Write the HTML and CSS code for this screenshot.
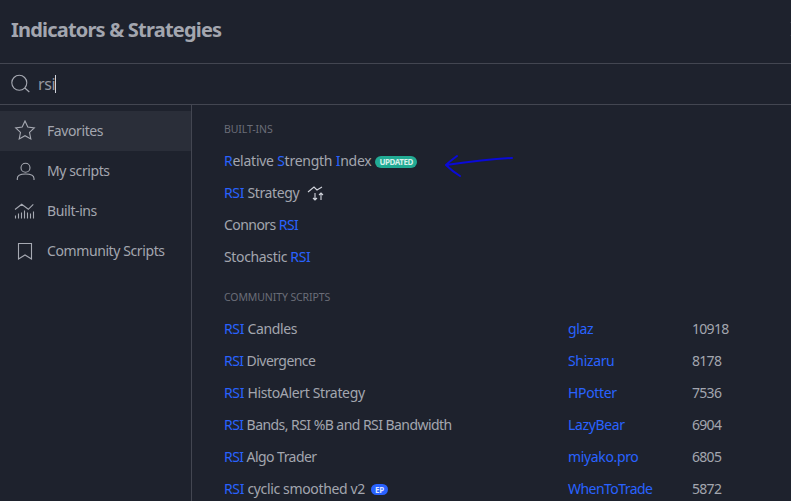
FILE: index.html
```html
<!DOCTYPE html>
<html lang="en">
<head>
<meta charset="utf-8">
<title>Indicators &amp; Strategies</title>
<link rel="stylesheet" href="styles.css">
</head>
<body>
<div class="dialog">
  <header class="head">
    <h1 class="title">Indicators &amp; Strategies</h1>
    <svg class="close" width="16" height="16" viewBox="0 0 16 16"><path d="M1 1l14 14M15 1L1 15" stroke="#b2b5be" stroke-width="1.2" fill="none"/></svg>
  </header>
  <div class="search">
    <svg class="search-icon" width="20" height="20" viewBox="0 0 20 20" fill="none" stroke="#a6a9b2" stroke-width="1.1"><circle cx="8.300" cy="8.800" r="7.500"/><path d="M13.800 14l4.500 4"/></svg>
    <span class="query">rsi</span><span class="caret"></span>
  </div>
  <div class="body">
    <nav class="side">
      <div class="nav active">
        <svg class="nav-icon" width="22" height="22" viewBox="0 0 22 22" fill="none" stroke="#a6a9b2" stroke-width="1.1"><path d="M11 1l2.800 6.100 6.500.8-4.800 4.500 1.300 6.600L11 15.700 5.200 19l1.300-6.600L1.700 7.900l6.500-.8z"/></svg>
        <span class="nav-text">Favorites</span>
      </div>
      <div class="nav">
        <svg class="nav-icon" width="22" height="22" viewBox="0 0 22 22" fill="none" stroke="#a6a9b2" stroke-width="1.1"><circle cx="11.500" cy="7.800" r="4.500"/><path d="M3.300 20v-1.500C3.300 15.500 6.500 14 11.500 14s8.500 1.500 8.500 4.500V20"/></svg>
        <span class="nav-text">My scripts</span>
      </div>
      <div class="nav">
        <svg class="nav-icon" width="22" height="22" viewBox="0 0 22 22" fill="none" stroke="#a6a9b2" stroke-width="1.1"><path d="M1 9.500l6.700-5.200 6.600 5 5-5M1.500 18.500v-3M4.500 18.500v-5M7.500 18.500v-6M10.500 18.500v-8M13.500 18.500v-6M16.500 18.500v-5M19.500 18.500v-7"/></svg>
        <span class="nav-text">Built-ins</span>
      </div>
      <div class="nav">
        <svg class="nav-icon" width="22" height="22" viewBox="0 0 22 22" fill="none" stroke="#a6a9b2" stroke-width="1.1"><path d="M4.500 3.500h13V19L11 15l-6.500 4z"/></svg>
        <span class="nav-text">Community Scripts</span>
      </div>
    </nav>
    <main class="main">
      <div class="section">BUILT-INS</div>
      <div class="row"><div class="name loose"><b>R</b>elative <b>S</b>trength <b>I</b>ndex<span class="badge updated">UPDATED</span></div></div>
      <div class="row"><div class="name"><b>RSI</b> Strategy<svg class="strategy" width="18" height="18" viewBox="0 0 18 18" fill="none" stroke="#d1d4dc" stroke-width="1.100"><path d="M1 7l6-5 3 3 5-3M8 8v7M6 13l2 2 2-2M14 15V8M12 10l2-2 2 2"/></svg></div></div>
      <div class="row"><div class="name tight">Connors <b>RSI</b></div></div>
      <div class="row"><div class="name">Stochastic <b>RSI</b></div></div>
      <div class="section">COMMUNITY SCRIPTS</div>
      <div class="row"><div class="name"><b>RSI</b> Candles</div><a class="author">glaz</a><span class="count">10918</span></div>
      <div class="row"><div class="name tight"><b>RSI</b> Divergence</div><a class="author">Shizaru</a><span class="count">8178</span></div>
      <div class="row"><div class="name"><b>RSI</b> HistoAlert Strategy</div><a class="author">HPotter</a><span class="count">7536</span></div>
      <div class="row"><div class="name tight"><b>RSI</b> Bands, RSI %B and RSI Bandwidth</div><a class="author">LazyBear</a><span class="count">6904</span></div>
      <div class="row"><div class="name tight"><b>RSI</b> Algo Trader</div><a class="author">miyako.pro</a><span class="count">6805</span></div>
      <div class="row"><div class="name"><b>RSI</b> cyclic smoothed v2<span class="badge ep">EP</span></div><a class="author tight">WhenToTrade</a><span class="count">5872</span></div>
    </main>
  </div>
</div>
<svg class="arrow" width="80" height="30" viewBox="0 0 80 30" fill="none" stroke="#0a0ad8" stroke-width="2" stroke-linecap="round" stroke-linejoin="round"><path d="M70 6 C50 7 25 10 4 13 M15 4 C11 7 7 10 4 13 C8 17 13 21 18 24"/></svg>
</body>
</html>
```
FILE: styles.css
```css
html, body { margin: 0; padding: 0; background: #1e222d; overflow: hidden; }
body { width: 791px; height: 501px; position: relative; font-family: "Noto Sans", sans-serif; color: #b2b5be; letter-spacing: -0.35px; }
.dialog { width: 791px; height: 501px; display: flex; flex-direction: column; overflow: hidden; }
.head { height: 58px; padding-bottom: 5px; flex: none; display: flex; align-items: center; justify-content: space-between; padding-left: 11px; border-bottom: 1px solid #434651; }
.title { margin: 0; font-size: 20px; font-weight: 700; color: #a3a6af; letter-spacing: -0.8px; }
.close { margin-right: -15px; }
.search { height: 40px; flex: none; display: flex; align-items: center; padding-left: 11px; border-bottom: 1px solid #434651; font-size: 16px; color: #9598a1; }
.search-icon { margin-right: 7px; }
.caret { width: 1px; height: 18px; background: #d1d4dc; }
.body { flex: 1; display: flex; min-height: 0; }
.side { width: 191px; flex: none; padding-top: 6px; border-right: 1px solid #434651; }
.nav { height: 40px; display: flex; align-items: center; padding-left: 14px; font-size: 14px; color: #a3a6af; gap: 11px; letter-spacing: -0.4px; }
.nav-text { padding-bottom: 2px; }
.nav.active { background: #2a2e39; }
.main { flex: 1; padding-left: 32px; }
.section { font-size: 10.500px; letter-spacing: -0.1px; color: #6a6d78; height: 16px; line-height: 16px; margin-top: 16px; margin-bottom: 8px; }
.row { height: 32px; display: flex; align-items: center; font-size: 14px; line-height: 20px; color: #a3a6af; }
.name { width: 344px; flex: none; white-space: nowrap; }
.loose { letter-spacing: -0.25px; }
.tight { letter-spacing: -0.55px; }
.name b { font-weight: 400; color: #2962ff; }
.author { width: 124px; flex: none; color: #2962ff; }
.count { color: #a3a6af; letter-spacing: -0.7px; }
.badge { display: inline-block; vertical-align: 1px; border-radius: 6px; font-size: 8px; font-weight: 700; line-height: 12px; letter-spacing: -0.45px; padding: 0 4px; margin-left: 4px; color: #d8f0ea; }
.updated { background: #22ab94; }
.ep { background: #2962ff; color: #dfe6ff; margin-left: 6px; line-height: 11px; letter-spacing: -0.2px; }
.strategy { margin: -4px 0 -4px 8px; vertical-align: -1px; }
.arrow { position: absolute; left: 442px; top: 152px; }
```
